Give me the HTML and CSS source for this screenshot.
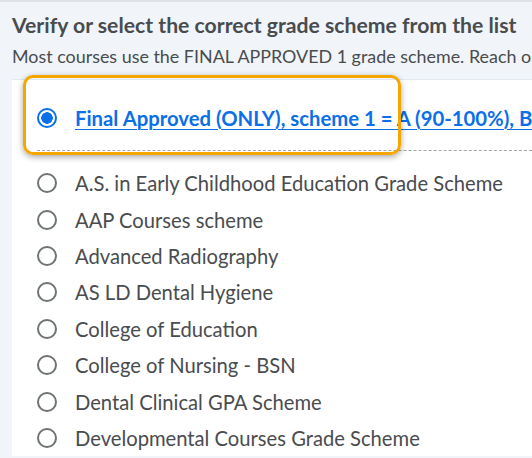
FILE: index.html
```html
<!DOCTYPE html>
<html>
<head>
<meta charset="utf-8">
<link rel="stylesheet" href="styles.css">
</head>
<body>
<div class="page">
  <h2 class="title">Verify or select the correct grade scheme from the list</h2>
  <p class="sub">Most courses use the FINAL APPROVED 1 grade scheme. Reach out to your department if unsure.</p>
  <div class="panel">
    <div class="selected-row">
      <span class="radio on"></span>
      <a class="link" href="#">Final Approved (ONLY), scheme 1 = A (90-100%), B (80-89%)</a>
      <div class="highlight"></div>
    </div>
    <ul class="list">
      <li><span class="radio"></span>A.S. in Early Childhood Education Grade Scheme</li>
      <li><span class="radio"></span>AAP Courses scheme</li>
      <li><span class="radio"></span>Advanced Radiography</li>
      <li><span class="radio"></span>AS LD Dental Hygiene</li>
      <li><span class="radio"></span>College of Education</li>
      <li><span class="radio"></span>College of Nursing - BSN</li>
      <li><span class="radio"></span>Dental Clinical GPA Scheme</li>
      <li><span class="radio"></span>Developmental Courses Grade Scheme</li>
    </ul>
  </div>
</div>
</body>
</html>
```

FILE: styles.css
```css
html, body {
  margin: 0;
  padding: 0;
  background: #f1f5f9;
  overflow: hidden;
}
body {
  font-family: Lato, "Noto Sans", sans-serif;
  color: #494c4e;
  width: 532px;
  height: 458px;
}
.page {
  border-top: 2px solid #dfe3e7;
  padding-top: 10px;
  padding-left: 12px;
  white-space: nowrap;
}
.title {
  margin: 0;
  font-size: 21.2px;
  font-weight: 700;
  line-height: 26px;
  color: #494c4e;
}
.sub {
  margin: 7px 0 0 0;
  font-size: 17.9px;
  line-height: 22px;
  color: #494c4e;
}
.panel {
  background: #fff;
  margin-top: 12px;
  border-top: 1px solid #e3e9f1;
  padding-left: 25px;
}
.selected-row {
  position: relative;
  display: flex;
  align-items: center;
  height: 71px;
  padding-top: 5px;
  box-sizing: border-box;
  border-bottom: 1px dashed #a3a6a8;
  gap: 18px;
}
.highlight {
  position: absolute;
  left: -14px;
  top: -5px;
  width: 378px;
  height: 80px;
  border: 3px solid #f5a700;
  border-radius: 10px;
  box-shadow: 0 2px 6px rgba(0,0,0,0.35);
  pointer-events: none;
  box-sizing: border-box;
}
.radio {
  flex: none;
  width: 20px;
  height: 20px;
  border-radius: 50%;
  border: 2px solid #6e7376;
  box-sizing: border-box;
  background: #fff;
}
.radio.on {
  border: 2px solid #0a6fe8;
  background: radial-gradient(circle, #0a6fe8 0 5.5px, #fff 6px);
}
.link {
  color: #0a6fe8;
  font-size: 20.3px;
  font-weight: 700;
  text-decoration: underline;
  text-underline-offset: 3px;
  text-decoration-thickness: 1px;
}
.list {
  list-style: none;
  margin: 0;
  padding: 14px 0 0 0;
}
.list li {
  display: flex;
  align-items: center;
  gap: 18px;
  height: 36.4px;
  font-size: 20.2px;
}
```
